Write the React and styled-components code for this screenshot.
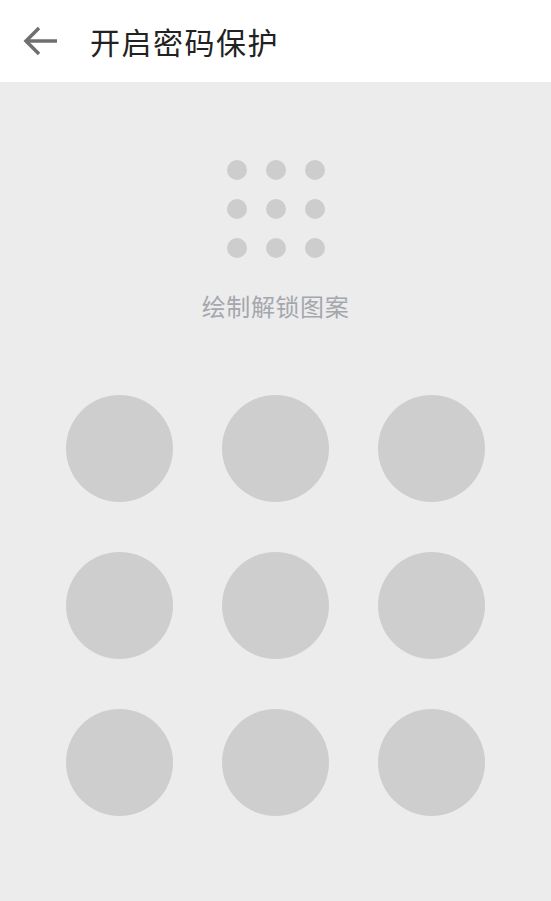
import React from 'react';
import styled, { createGlobalStyle } from 'styled-components';

const GlobalStyle = createGlobalStyle`
  html, body {
    margin: 0;
    padding: 0;
    background: #ececec;
    font-family: Roboto, "Noto Sans CJK SC", sans-serif;
  }
`;

const Page = styled.div`
  width: 551px;
  min-height: 901px;
  background: #ececec;
  display: flex;
  flex-direction: column;
`;

const Header = styled.header`
  height: 82px;
  background: #ffffff;
  display: flex;
  align-items: center;
  flex-shrink: 0;
`;

const BackButton = styled.button`
  width: 40px;
  height: 40px;
  margin-left: 20px;
  padding: 0;
  border: none;
  background: none;
  display: flex;
  align-items: center;
  justify-content: center;
`;

const Title = styled.h1`
  margin: 0 0 0 30px;
  font-size: 30px;
  font-weight: 400;
  color: #222222;
  letter-spacing: 1.5px;
  font-family: "Noto Sans CJK SC", sans-serif;
`;

const Body = styled.main`
  display: flex;
  flex-direction: column;
  align-items: center;
  padding-top: 78px;
`;

const Preview = styled.div`
  display: grid;
  grid-template-columns: repeat(3, 20px);
  gap: 19px;
`;

const SmallDot = styled.span`
  width: 20px;
  height: 20px;
  border-radius: 50%;
  background: #cdcdcd;
`;

const Hint = styled.p`
  margin: 32px 0 0;
  font-size: 24px;
  line-height: 32px;
  letter-spacing: 0.6px;
  color: #a4a7ac;
  font-family: "Noto Sans CJK SC", sans-serif;
`;

const Pad = styled.div`
  margin-top: 73px;
  display: grid;
  grid-template-columns: repeat(3, 107px);
  column-gap: 49px;
  row-gap: 50px;
`;

const Node = styled.span`
  width: 107px;
  height: 107px;
  border-radius: 50%;
  background: #cecece;
`;

const cells = Array.from({ length: 9 }, (_, i) => i);

export default function App() {
  return (
    <Page>
      <GlobalStyle />
      <Header>
        <BackButton aria-label="返回">
          <svg width="36" height="32" viewBox="0 0 36 32" fill="none">
            <path d="M35 16H4" stroke="#6f6f6f" strokeWidth="3.5" />
            <path d="M17 3L4 16l13 13" stroke="#6f6f6f" strokeWidth="3.5" />
          </svg>
        </BackButton>
        <Title>开启密码保护</Title>
      </Header>
      <Body>
        <Preview>
          {cells.map(i => <SmallDot key={i} />)}
        </Preview>
        <Hint>绘制解锁图案</Hint>
        <Pad>
          {cells.map(i => <Node key={i} />)}
        </Pad>
      </Body>
    </Page>
  );
}
